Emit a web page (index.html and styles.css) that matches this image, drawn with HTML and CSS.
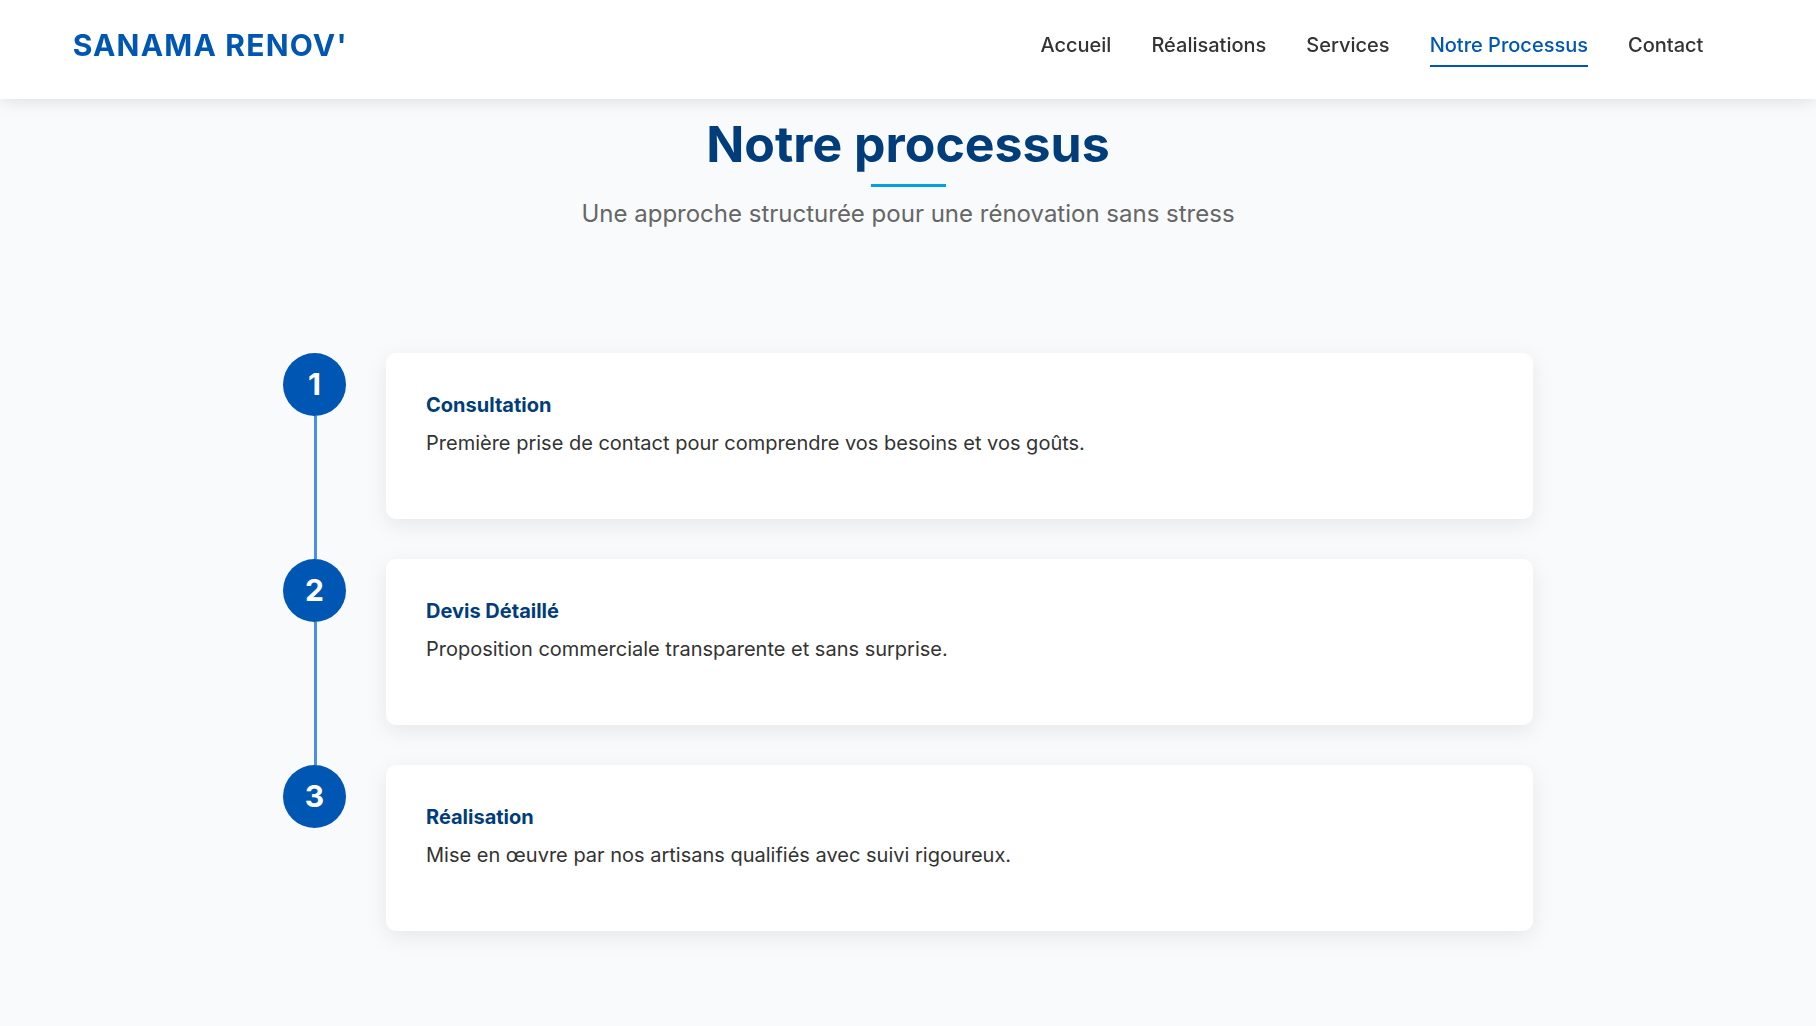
FILE: index.html
```html
<!DOCTYPE html>
<html lang="fr">
<head>
<meta charset="utf-8">
<meta name="viewport" content="width=device-width, initial-scale=1">
<title>Sanama Renov' – Notre processus</title>
<link rel="stylesheet" href="styles.css">
</head>
<body>
<header class="header">
  <a class="logo" href="#">SANAMA RENOV'</a>
  <nav class="nav">
    <a class="nav-link" href="#">Accueil</a>
    <a class="nav-link" href="#">Réalisations</a>
    <a class="nav-link" href="#">Services</a>
    <a class="nav-link nav-link-active" href="#" aria-current="page">Notre Processus</a>
    <a class="nav-link" href="#">Contact</a>
  </nav>
</header>
<main class="process">
  <div class="section-header">
    <h1 class="section-title">Notre processus</h1>
    <p class="section-subtitle">Une approche structurée pour une rénovation sans stress</p>
  </div>
  <ol class="timeline">
    <li class="step">
      <div class="step-marker"><span class="step-number">1</span></div>
      <div class="step-card">
        <h2 class="step-title">Consultation</h2>
        <p class="step-text">Première prise de contact pour comprendre vos besoins et vos goûts.</p>
      </div>
    </li>
    <li class="step">
      <div class="step-marker"><span class="step-number">2</span></div>
      <div class="step-card">
        <h2 class="step-title">Devis Détaillé</h2>
        <p class="step-text">Proposition commerciale transparente et sans surprise.</p>
      </div>
    </li>
    <li class="step">
      <div class="step-marker"><span class="step-number">3</span></div>
      <div class="step-card">
        <h2 class="step-title">Réalisation</h2>
        <p class="step-text">Mise en œuvre par nos artisans qualifiés avec suivi rigoureux.</p>
      </div>
    </li>
  </ol>
</main>
</body>
</html>
```
FILE: styles.css
```css
* {
  box-sizing: border-box;
  margin: 0;
  padding: 0;
}

body {
  background: #f8fafc;
  color: #333;
  font-family: Inter, "Liberation Sans", sans-serif;
  font-size: 20px;
  line-height: 32px;
}

.header {
  position: sticky;
  top: 0;
  z-index: 10;
  display: flex;
  justify-content: space-between;
  align-items: flex-start;
  padding: 24px 4%;
  min-height: 99px;
  background: #fff;
  box-shadow: 0 3px 15px rgba(0, 0, 0, 0.1);
  will-change: transform;
}

.logo {
  color: #0056b3;
  font-size: 30px;
  font-weight: 700;
  line-height: 42px;
  letter-spacing: 0.04em;
  text-decoration: none;
}

.nav {
  display: flex;
  gap: 40px;
  padding-right: 40px;
}

.nav-link {
  padding: 5px 0 4px;
  border-bottom: 2px solid transparent;
  color: #333;
  font-weight: 500;
  text-decoration: none;
}

.nav-link-active {
  border-bottom-color: #0056b3;
  color: #0056b3;
}

.process {
  padding: 15px 40px 96px;
}

.section-header {
  margin-bottom: 119px;
  text-align: center;
}

.section-title {
  color: #003d7a;
  font-size: 50px;
  font-weight: 700;
  line-height: 60px;
}

.section-title::after {
  content: "";
  display: block;
  width: 75px;
  height: 3px;
  margin: 10px auto 7px;
  background: #00a3e0;
}

.section-subtitle {
  color: #666;
  font-size: 24px;
  line-height: 40px;
}

.timeline {
  display: grid;
  gap: 40px;
  max-width: 1250px;
  margin: 0 auto;
  list-style: none;
}

.step {
  display: flex;
  gap: 40px;
}

.step-marker {
  display: flex;
  flex-direction: column;
}

.step-number {
  width: 63px;
  height: 63px;
  border-radius: 50%;
  background: #0056b3;
  color: #fff;
  font-size: 30px;
  font-weight: 700;
  line-height: 63px;
  text-align: center;
}

.step:not(:last-child) .step-marker::after {
  content: "";
  flex: 1;
  width: 3px;
  margin: 0 0 -40px 31px;
  background: #4a90e2;
}

.step-card {
  flex: 1;
  padding: 36px 40px 60px;
  border-radius: 10px;
  background: #fff;
  box-shadow: 0 6px 22px rgba(0, 0, 0, 0.08);
}

.step-title {
  margin-bottom: 6px;
  color: #003d7a;
  font-size: 20px;
  font-weight: 700;
  line-height: 32px;
}
```
